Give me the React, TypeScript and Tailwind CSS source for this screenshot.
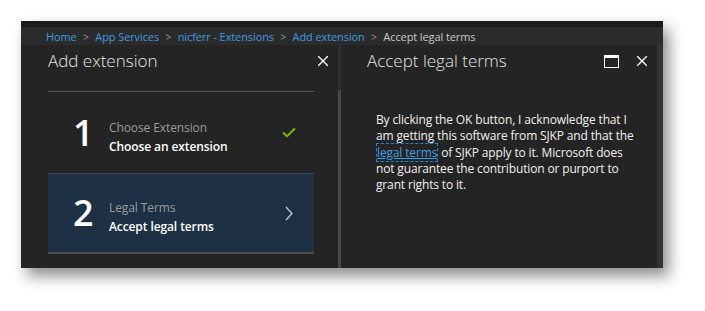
import { X, Check } from "lucide-react";

const FONT = { fontFamily: '"Open Sans", "Noto Sans", sans-serif' };

const crumbs = ["Home", "App Services", "nicferr - Extensions", "Add extension"];

function Crumbs() {
  return (
    <div className="flex h-[18px] items-center bg-[#2b2b2b] pl-[25px] pt-px text-[11px] leading-none tracking-[-0.1px]">
      {crumbs.map((c) => (
        <span key={c} className="flex items-center">
          <span className="text-[#3c9be0]">{c}</span>
          <span className="mx-[6.5px] text-[10px] text-[#9a9a9a]">&gt;</span>
        </span>
      ))}
      <span className="text-[#c8c8c8]">Accept legal terms</span>
    </div>
  );
}

function Chevron() {
  return (
    <svg width="10" height="15" viewBox="0 0 10 15" className="mr-[1px]">
      <polyline points="2,1 8,7.5 2,14" fill="none" stroke="#c8c8c8" strokeWidth="1.3" />
    </svg>
  );
}

function Step({ n, label, value, done, active }: { n: string; label: string; value: string; done?: boolean; active?: boolean }) {
  return (
    <div
      className={
        active
          ? "flex h-[81px] w-[266px] items-center border-t border-b-2 border-t-[#3b4654] border-b-[#4a4a4a] bg-[#1e3044] pl-[25px] pr-[19px]"
          : "flex h-[81px] w-[266px] items-center pl-[25px] pr-[17px]"
      }
    >
      <span className="w-[36px] text-[36px] font-semibold leading-none text-white">{n}</span>
      <div className="mt-[9px] flex flex-1 flex-col gap-[3px] tracking-[-0.1px]">
        <span className="text-[12px] leading-[16px] text-[#9c9c9c]">{label}</span>
        <span className="text-[12px] font-semibold leading-[16px] text-white">{value}</span>
      </div>
      {done ? <Check className="h-[16px] w-[16px] text-[#7fba00]" strokeWidth={3} /> : <Chevron />}
    </div>
  );
}

export default function App() {
  return (
    <div className="h-[311px] w-[705px] bg-white pl-[21px] pt-[21px]" style={FONT}>
      <div className="flex h-[247px] w-[642px] flex-col bg-[#242424] shadow-[6px_8px_14px_rgba(0,0,0,0.45)]">
        <div className="h-[6px] bg-[#1b1b1b]" />
        <Crumbs />
        <div className="flex flex-1">
          {/* left blade */}
          <div className="flex w-[317px] flex-col">
            <div className="flex h-[32px] items-center justify-between pl-[27px] pr-[6px]">
              <span className="text-[17px] font-light text-[#e4e4e4]">Add extension</span>
              <X className="h-[18px] w-[18px] text-white" strokeWidth={1.8} />
            </div>
            <div className="ml-[27px] mt-[14px] h-px w-[266px] bg-[#555555]" />
            <div className="ml-[27px] flex flex-col">
              <Step n="1" label="Choose Extension" value="Choose an extension" done />
              <Step n="2" label="Legal Terms" value="Accept legal terms" active />
            </div>
          </div>
          <div className="flex w-[3px] flex-col">
            <div className="h-[45px] bg-[#2e2e2e]" />
            <div className="flex-1 bg-[#474747]" />
          </div>
          {/* right blade */}
          <div className="flex flex-1 flex-col">
            <div className="flex h-[32px] items-center justify-between pl-[26px] pr-[6px]">
              <span className="text-[17px] font-light text-[#e4e4e4]">Accept legal terms</span>
              <div className="flex items-center gap-[14px]">
                <div className="h-[13px] w-[15px] border-[1.5px] border-t-[3px] border-white" />
                <X className="h-[18px] w-[18px] text-white" strokeWidth={1.8} />
              </div>
            </div>
            <p className="ml-[35px] mt-[35px] text-[12px] leading-[16.3px] tracking-[-0.15px] text-[#f0f0f0]">
              By clicking the OK button, I acknowledge that I
              <br />
              am getting this software from SJKP and that the
              <br />
              <span className="border border-dashed border-[#1a8ad4] text-[#3ca0e6] underline">legal terms</span> of SJKP apply
              to it. Microsoft does
              <br />
              not guarantee the contribution or purport to
              <br />
              grant rights to it.
            </p>
          </div>
          <div className="w-[6px] bg-[#333333]" />
        </div>
      </div>
    </div>
  );
}
